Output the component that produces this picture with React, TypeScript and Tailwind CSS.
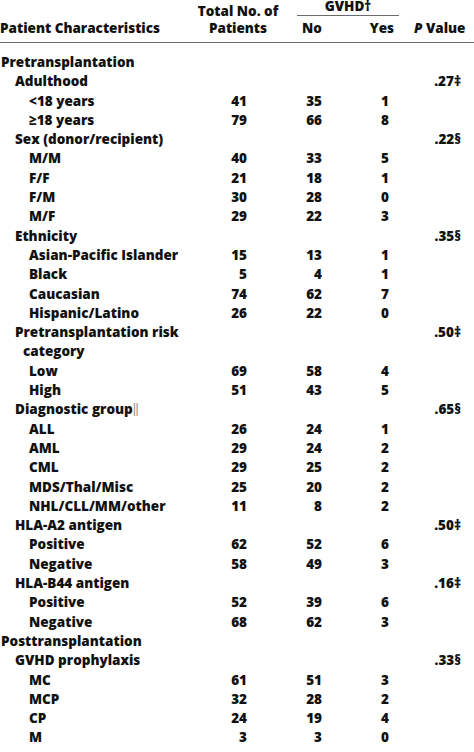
import React from "react";

type Row = {
  l: 0 | 1 | 2;
  t: React.ReactNode;
  a?: string;
  b?: string;
  c?: string;
  p?: string;
  two?: boolean;
};

const rows: Row[] = [
  { l: 0, t: "Pretransplantation" },
  { l: 1, t: "Adulthood", p: ".27‡" },
  { l: 2, t: "<18 years", a: "41", b: "35", c: "1" },
  { l: 2, t: "≥18 years", a: "79", b: "66", c: "8" },
  { l: 1, t: "Sex (donor/recipient)", p: ".22§" },
  { l: 2, t: "M/M", a: "40", b: "33", c: "5" },
  { l: 2, t: "F/F", a: "21", b: "18", c: "1" },
  { l: 2, t: "F/M", a: "30", b: "28", c: "0" },
  { l: 2, t: "M/F", a: "29", b: "22", c: "3" },
  { l: 1, t: "Ethnicity", p: ".35§" },
  { l: 2, t: "Asian-Pacific Islander", a: "15", b: "13", c: "1" },
  { l: 2, t: "Black", a: "5", b: "4", c: "1" },
  { l: 2, t: "Caucasian", a: "74", b: "62", c: "7" },
  { l: 2, t: "Hispanic/Latino", a: "26", b: "22", c: "0" },
  { l: 1, t: "Pretransplantation risk category", p: ".50‡", two: true },
  { l: 2, t: "Low", a: "69", b: "58", c: "4" },
  { l: 2, t: "High", a: "51", b: "43", c: "5" },
  {
    l: 1,
    t: (
      <>
        Diagnostic group
        <span className="font-normal text-[#888]">‖</span>
      </>
    ),
    p: ".65§",
  },
  { l: 2, t: "ALL", a: "26", b: "24", c: "1" },
  { l: 2, t: "AML", a: "29", b: "24", c: "2" },
  { l: 2, t: "CML", a: "29", b: "25", c: "2" },
  { l: 2, t: "MDS/Thal/Misc", a: "25", b: "20", c: "2" },
  { l: 2, t: "NHL/CLL/MM/other", a: "11", b: "8", c: "2" },
  { l: 1, t: "HLA-A2 antigen", p: ".50‡" },
  { l: 2, t: "Positive", a: "62", b: "52", c: "6" },
  { l: 2, t: "Negative", a: "58", b: "49", c: "3" },
  { l: 1, t: "HLA-B44 antigen", p: ".16‡" },
  { l: 2, t: "Positive", a: "52", b: "39", c: "6" },
  { l: 2, t: "Negative", a: "68", b: "62", c: "3" },
  { l: 0, t: "Posttransplantation" },
  { l: 1, t: "GVHD prophylaxis", p: ".33§" },
  { l: 2, t: "MC", a: "61", b: "51", c: "3" },
  { l: 2, t: "MCP", a: "32", b: "28", c: "2" },
  { l: 2, t: "CP", a: "24", b: "19", c: "4" },
  { l: 2, t: "M", a: "3", b: "3", c: "0" },
];

export default function App() {
  return (
    <div className="w-[474px] h-[752px] overflow-hidden bg-white text-[#111] font-extrabold text-[13.5px] [font-family:'Open_Sans',Lato,sans-serif]">
      {/* Header */}
      <div className="flex items-end h-[43px] pb-[5px] border-b border-[#6b6b6b] whitespace-nowrap">
        <div className="w-[197px] leading-[17px]">Patient Characteristics</div>
        <div className="w-[82px] text-center leading-[17px]">
          Total No. of
          <br />
          Patients
        </div>
        <div className="ml-[18px] w-[102px] flex flex-col">
          <div className="text-center leading-[13px] mb-[2px]">GVHD†</div>
          <div className="border-t border-[#6b6b6b]" />
          <div className="flex justify-between leading-[17px] mt-[4px] px-[5px]">
            <span>No</span>
            <span>Yes</span>
          </div>
        </div>
        <div className="ml-[15px] leading-[17px]">
          <span className="italic">P</span> Value
        </div>
      </div>

      {/* Body */}
      <div className="mt-[10px] flex flex-col">
        {rows.map((r, i) => (
          <div
            key={i}
            className={`grid grid-cols-[200px_47px_75px_67px_72px] whitespace-nowrap ${
              r.two ? "h-[38.6px]" : "h-[19.3px]"
            } leading-[19.3px]`}
          >
            <div
              className={
                r.l === 0
                  ? "pl-[1px]"
                  : r.l === 1
                  ? r.two
                    ? "pl-[23px] -indent-[8px] whitespace-normal"
                    : "pl-[15px]"
                  : "pl-[29px]"
              }
            >
              {r.two ? (
                <>
                  Pretransplantation risk
                  <br />
                  category
                </>
              ) : (
                r.t
              )}
            </div>
            <div className="text-right">{r.a}</div>
            <div className="text-right">{r.b}</div>
            <div className="text-right">{r.c}</div>
            <div className="text-right">{r.p}</div>
          </div>
        ))}
      </div>
    </div>
  );
}
